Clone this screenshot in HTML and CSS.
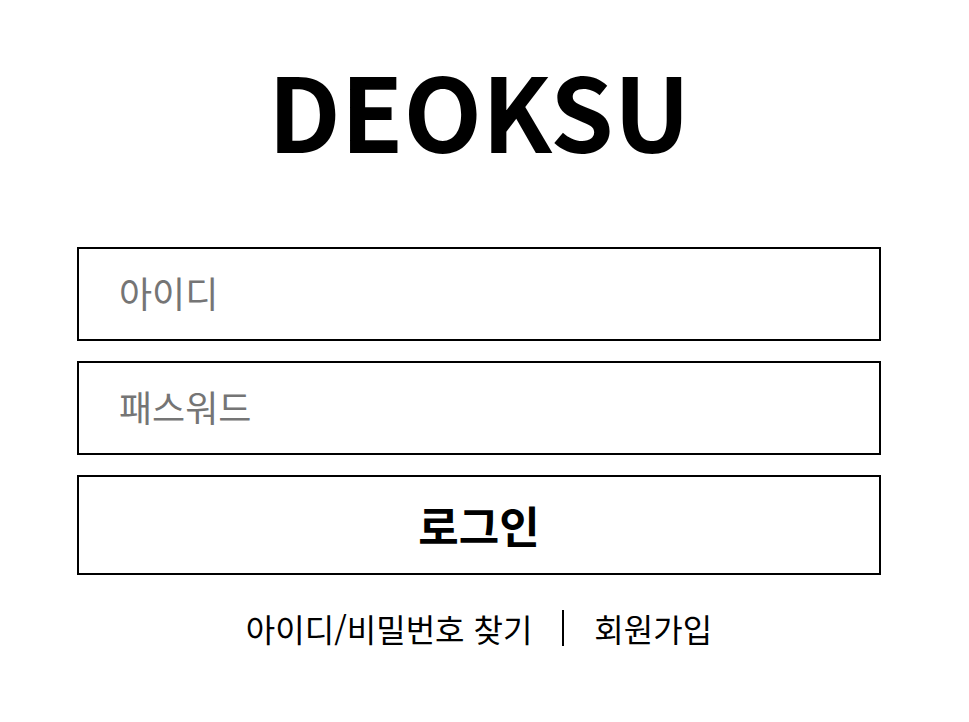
FILE: index.html
```html
<!DOCTYPE html>
<html lang="ko">
<head>
<meta charset="utf-8">
<title>DEOKSU 로그인</title>
<link rel="stylesheet" href="styles.css">
</head>
<body>
<main class="login">
  <h1 class="logo">DEOKSU</h1>
  <form class="form">
    <input class="field" type="text" placeholder="아이디">
    <input class="field" type="password" placeholder="패스워드">
    <button class="submit" type="button">로그인</button>
  </form>
  <nav class="links">
    <a class="link" href="#">아이디/비밀번호 찾기</a>
    <span class="divider"></span>
    <a class="link" href="#">회원가입</a>
  </nav>
</main>
</body>
</html>
```
FILE: styles.css
```css
* { box-sizing: border-box; }
html, body { margin: 0; padding: 0; background: #fff; }
body {
  font-family: "Noto Sans CJK KR", "Noto Sans", sans-serif;
  color: #000;
}
.login {
  width: 804px;
  margin-left: 77px;
  padding-top: 34px;
  display: flex;
  flex-direction: column;
  align-items: stretch;
}
.logo {
  margin: 0;
  text-align: center;
  font-size: 102px;
  font-weight: 700;
  line-height: 150px;
  letter-spacing: 0;
}
.form {
  display: flex;
  flex-direction: column;
  gap: 20px;
  margin-top: 63px;
}
.field {
  height: 94px;
  border: 2px solid #000;
  border-radius: 0;
  padding: 0 0 4px 40px;
  font-family: inherit;
  font-size: 36px;
  color: #000;
  background: #fff;
  outline: none;
}
.field::placeholder { color: #757575; }
.submit {
  height: 100px;
  border: 2px solid #000;
  border-radius: 0;
  background: #fff;
  font-family: inherit;
  font-size: 44px;
  font-weight: 700;
  color: #000;
}
.links {
  display: flex;
  justify-content: center;
  align-items: center;
  gap: 30px;
  margin-top: 30px;
}
.link {
  color: #000;
  text-decoration: none;
  font-size: 32px;
}
.divider {
  width: 2px;
  height: 36px;
  background: #000;
}
```
